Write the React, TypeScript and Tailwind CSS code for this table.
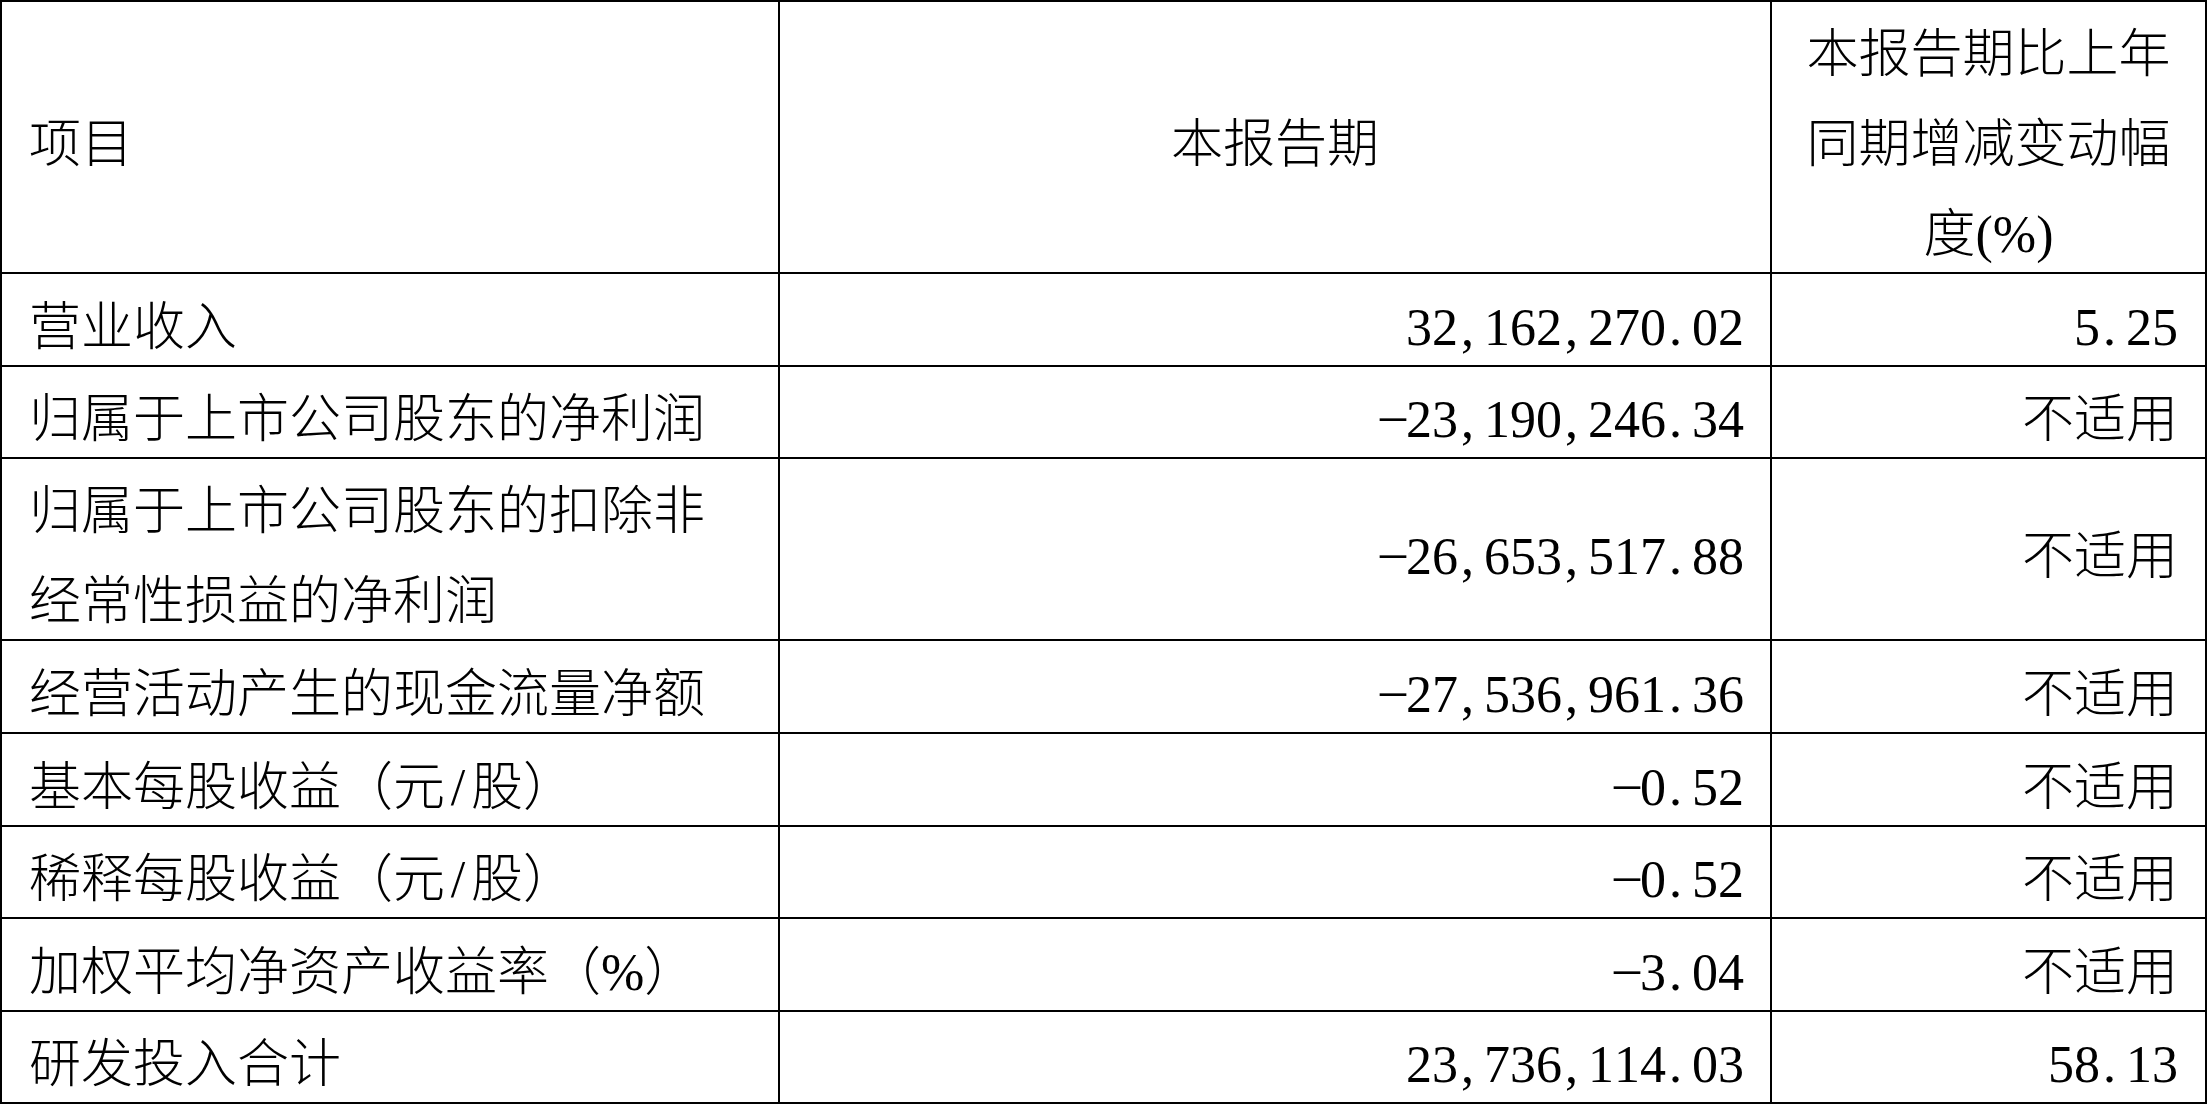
import React from "react";

function Num({ v }: { v: string }) {
  return (
    <span className="inline-flex whitespace-nowrap">
      {v.split("").map((c, i) => {
        if (c === "-")
          return (
            <span key={i} className="inline-block w-[26px] text-left relative -top-[5px]">
              –
            </span>
          );
        if (c === "," || c === ".")
          return (
            <span key={i} className="inline-block w-[26px] text-left pl-[3px]">
              {c}
            </span>
          );
        return (
          <span key={i} className="inline-block w-[26px] text-center">
            {c}
          </span>
        );
      })}
    </span>
  );
}

const Slash = () => <span className="inline-block w-[26px] text-center">/</span>;

type Row = { label: React.ReactNode; cur: string; chg: string };

const rows: Row[] = [
  { label: "营业收入", cur: "32,162,270.02", chg: "5.25" },
  { label: "归属于上市公司股东的净利润", cur: "-23,190,246.34", chg: "不适用" },
  {
    label: (
      <>
        归属于上市公司股东的扣除非
        <br />
        经常性损益的净利润
      </>
    ),
    cur: "-26,653,517.88",
    chg: "不适用",
  },
  { label: "经营活动产生的现金流量净额", cur: "-27,536,961.36", chg: "不适用" },
  {
    label: (
      <>
        基本每股收益（元<Slash />股）
      </>
    ),
    cur: "-0.52",
    chg: "不适用",
  },
  {
    label: (
      <>
        稀释每股收益（元<Slash />股）
      </>
    ),
    cur: "-0.52",
    chg: "不适用",
  },
  { label: "加权平均净资产收益率（%）", cur: "-3.04", chg: "不适用" },
  { label: "研发投入合计", cur: "23,736,114.03", chg: "58.13" },
];

const cell =
  "border-r-2 border-b-2 border-black flex items-center pt-[16px] leading-[90px] text-[52px]";

export default function App() {
  return (
    <div className="w-[2207px] h-[1104px] bg-white text-black font-['Liberation_Serif','Noto_Sans_CJK_SC',serif] font-light">
      <div className="w-[2207px] h-[1104px] grid grid-cols-[778px_992px_435px] grid-rows-[272px_93px_92px_182px_93px_93px_92px_93px_92px] border-l-2 border-t-2 border-black">
        <div className={`${cell} justify-start pl-[27px]`}>项目</div>
        <div className={`${cell} justify-center text-center`}>本报告期</div>
        <div className={`${cell} justify-center text-center`}>
          <span>
            本报告期比上年
            <br />
            同期增减变动幅
            <br />
            度(%)
          </span>
        </div>
        {rows.map((r, i) => (
          <React.Fragment key={i}>
            <div className={`${cell} justify-start pl-[27px] whitespace-nowrap`}>
              <span>{r.label}</span>
            </div>
            <div className={`${cell} justify-end pr-[26px]`}>
              <Num v={r.cur} />
            </div>
            <div className={`${cell} justify-end pr-[27px]`}>
              {r.chg === "不适用" ? <span>不适用</span> : <Num v={r.chg} />}
            </div>
          </React.Fragment>
        ))}
      </div>
    </div>
  );
}
